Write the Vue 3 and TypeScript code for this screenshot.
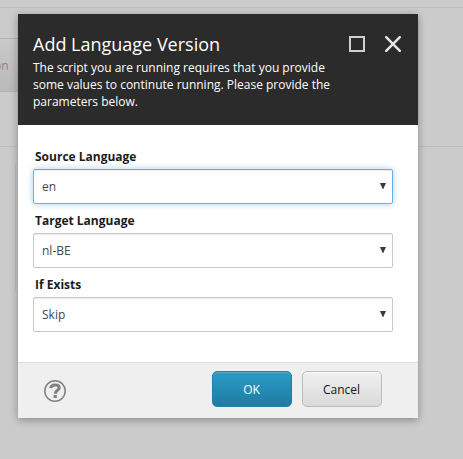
<script setup lang="ts">
import { reactive } from 'vue'

interface Field {
  id: string
  label: string
  value: string
  focused: boolean
}

const fields = reactive<Field[]>([
  { id: 'source', label: 'Source Language', value: 'en', focused: true },
  { id: 'target', label: 'Target Language', value: 'nl-BE', focused: false },
  { id: 'exists', label: 'If Exists', value: 'Skip', focused: false },
])
</script>

<template>
  <div class="screen">
    <div class="backdrop">
      <div class="strip"></div>
      <div class="toolbar"><div class="ribbon-button">on</div></div>
      <div class="panel"></div>
    </div>
    <section class="dialog" role="dialog">
      <header class="header">
        <div class="title-row">
          <h1>Add Language Version</h1>
          <div class="window-actions">
            <svg width="16" height="16" viewBox="0 0 16 16"><rect x="1" y="1" width="14" height="14" fill="none" stroke="#d0d0d0" stroke-width="2" /></svg>
            <svg width="16" height="16" viewBox="0 0 16 16"><path d="M1.2 1.2 14.8 14.8M14.8 1.2 1.2 14.8" fill="none" stroke="#e6e6e6" stroke-width="2.4" stroke-linecap="round" /></svg>
          </div>
        </div>
        <p>The script you are running requires that you provide some values to continute running. Please provide the parameters below.</p>
      </header>
      <main class="body">
        <div v-for="field in fields" :key="field.id" class="field">
          <div class="label">{{ field.label }}</div>
          <div class="select" :class="{ focused: field.focused }">
            <span>{{ field.value }}</span>
            <svg width="6" height="6" viewBox="0 0 6 6"><path d="M0 0h6L3.3 6h-.6z" fill="#3c3c3c" /></svg>
          </div>
        </div>
      </main>
      <footer class="footer">
        <svg class="help" width="22" height="22" viewBox="0 0 22 22">
          <circle cx="11" cy="11" r="10.2" fill="none" stroke="#808080" stroke-width="1.5" />
          <path d="M6.8 8.2C7 5.9 8.7 5 11.1 5C13.5 5 15.2 6 15.2 7.9C15.2 10.4 11.2 10.3 11.2 13.8" fill="none" stroke="#808080" stroke-width="3" />
          <rect x="9.6" y="15" width="3.2" height="3" fill="#808080" />
        </svg>
        <div class="buttons">
          <button class="primary">OK</button>
          <button>Cancel</button>
        </div>
      </footer>
    </section>
  </div>
</template>

<style>
body {
  margin: 0;
  overflow: hidden;
}
</style>

<style scoped>
.screen {
  position: relative;
  width: 463px;
  height: 459px;
  overflow: hidden;
  background: #cbcbcb;
  font-family: "Open Sans", sans-serif;
  font-size: 12px;
}
.screen * {
  box-sizing: border-box;
}
.strip {
  height: 8px;
  border-bottom: 1px solid #bdbdbd;
}
.toolbar {
  height: 139px;
  padding-top: 30px;
  border-bottom: 1px solid #bdbdbd;
}
.ribbon-button {
  width: 40px;
  height: 54px;
  padding-top: 18px;
  border: solid #b3b3b3;
  border-width: 1px 0;
  background: linear-gradient(#c9c9c9, #b9b9b9);
  color: #858585;
  line-height: 17px;
  text-indent: -6px;
}
.panel {
  width: 380px;
  height: 130px;
  margin: 15px 0 0 15px;
  border: 1px solid #c0c0c0;
  border-radius: 3px;
}
.dialog {
  position: absolute;
  top: 14px;
  left: 18px;
  width: 400px;
  height: 404px;
  display: flex;
  flex-direction: column;
  background: #fff;
  box-shadow: 0 2px 8px rgba(0, 0, 0, 0.33);
}
.header {
  height: 111px;
  padding: 18px 15px 0;
  background: #2b2b2b;
  color: #fff;
}
.title-row {
  display: flex;
  justify-content: space-between;
  height: 27px;
}
h1 {
  margin: 0;
  font-size: 18px;
  font-weight: 400;
  line-height: 25px;
}
.window-actions {
  display: flex;
  gap: 20px;
  padding: 4px 2px 0 0;
}
p {
  width: 310px;
  margin: 0;
  line-height: 17px;
}
.body {
  flex: 1;
  padding: 23px 15px 0;
}
.field {
  height: 64px;
}
.label {
  height: 21px;
  padding-left: 2px;
  color: #1c1c1c;
  font-weight: 700;
  line-height: 17px;
}
.select {
  display: flex;
  align-items: center;
  justify-content: space-between;
  width: 360px;
  height: 35px;
  padding: 0 6px 0 8px;
  border: 1px solid #c8c8c8;
  border-radius: 2px;
  box-shadow: inset 0 1px 1px rgba(0, 0, 0, 0.075);
  color: #474747;
}
.select svg {
  margin-top: -2px;
}
.select.focused {
  border-color: #66afe9;
  box-shadow: inset 0 1px 1px rgba(0, 0, 0, 0.075), 0 0 6px rgba(102, 175, 233, 0.6);
}
.footer {
  display: flex;
  justify-content: space-between;
  height: 56px;
  padding: 8px 36px 0 26px;
  border-top: 1px solid #ddd;
  background: #efefef;
}
.help {
  margin-top: 9px;
}
.buttons {
  display: flex;
  gap: 10px;
}
button {
  width: 80px;
  height: 36px;
  padding: 0 1px 0 0;
  border: 1px solid #bcbcbc;
  border-radius: 5px;
  background: linear-gradient(#f0f0f0, #d9d9d9);
  box-shadow: inset 0 1px 0 rgba(255, 255, 255, 0.5);
  color: #141414;
  font: 12px "Open Sans", sans-serif;
}
button.primary {
  border-color: #217fa5;
  background: linear-gradient(#289bc8, #217ca1);
  box-shadow: inset 0 1px 0 rgba(255, 255, 255, 0.2);
  color: #fff;
}
</style>
